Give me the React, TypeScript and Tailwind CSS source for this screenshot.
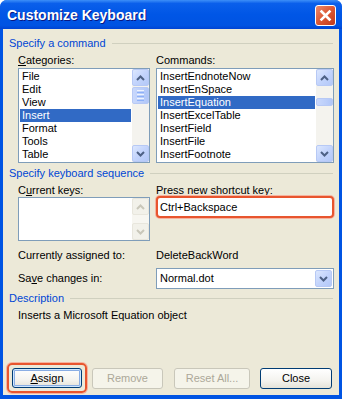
import React from "react";

function Chevron({ dir, color }: { dir: "up" | "down"; color: string }) {
  return (
    <svg width="9" height="6" viewBox="0 0 9 6">
      <path
        d={dir === "up" ? "M1 5 L4.5 1.5 L8 5" : "M1 1 L4.5 4.5 L8 1"}
        fill="none"
        stroke={color}
        strokeWidth="2"
      />
    </svg>
  );
}

function ArrowBtn({ dir, disabled }: { dir: "up" | "down"; disabled?: boolean }) {
  return (
    <div
      className={
        disabled
          ? "h-[17px] w-[17px] shrink-0 rounded-[2px] border border-[#E8E6DD] bg-[#F2F1EA] flex items-center justify-center"
          : "h-[17px] w-[17px] shrink-0 rounded-[2px] border border-[#B7C9F5] bg-[linear-gradient(135deg,#DCE7FE,#C3D4FC_50%,#B3C8F8)] flex items-center justify-center"
      }
    >
      <Chevron dir={dir} color={disabled ? "#C9C7BA" : "#4D6185"} />
    </div>
  );
}

function Thumb({ h }: { h: number }) {
  return (
    <div
      className="w-[17px] rounded-[2px] border border-[#B7C9F5] bg-[linear-gradient(to_right,#C9D8FC,#BBCEFA_60%,#B0C6F8)] flex flex-col items-center justify-center gap-[1px]"
      style={{ height: h }}
    >
      {h > 12 && (
        <>
          <div className="w-[7px] h-px bg-[#EEF4FE]" />
          <div className="w-[7px] h-px bg-[#8CB0F8]" />
          <div className="w-[7px] h-px bg-[#EEF4FE]" />
          <div className="w-[7px] h-px bg-[#8CB0F8]" />
          <div className="w-[7px] h-px bg-[#EEF4FE]" />
          <div className="w-[7px] h-px bg-[#8CB0F8]" />
        </>
      )}
    </div>
  );
}

function ScrollBar({ thumbTop, thumbH }: { thumbTop: number; thumbH: number }) {
  return (
    <div className="w-[17px] h-full flex flex-col bg-[#F4F3EE]">
      <ArrowBtn dir="up" />
      <div className="flex-1 relative">
        <div className="absolute left-0" style={{ top: thumbTop }}>
          <Thumb h={thumbH} />
        </div>
      </div>
      <ArrowBtn dir="down" />
    </div>
  );
}

function ListBox({
  items,
  selected,
  thumbTop,
  thumbH,
}: {
  items: string[];
  selected: number;
  thumbTop: number;
  thumbH: number;
}) {
  return (
    <div className="h-[95px] border border-[#7F9DB9] bg-white flex">
      <div className="flex-1 p-[1px] overflow-hidden">
        {items.map((it, i) => (
          <div
            key={it}
            className={
              i === selected
                ? "h-[13px] leading-[13px] pl-[2px] bg-[#316AC5] text-white whitespace-nowrap"
                : "h-[13px] leading-[13px] pl-[2px] whitespace-nowrap"
            }
          >
            {it}
          </div>
        ))}
      </div>
      <ScrollBar thumbTop={thumbTop} thumbH={thumbH} />
    </div>
  );
}

function GroupHeader({ title, className }: { title: string; className: string }) {
  return (
    <div className={"flex items-center h-[13px] pl-[6px] pr-[6px] " + className}>
      <span className="text-[#0046D5] leading-[13px] whitespace-nowrap">{title}</span>
      <div className="flex-1 h-px bg-[#D0D0BF] ml-[6px]" />
    </div>
  );
}

function XPButton({
  children,
  disabled,
  focused,
  className,
}: {
  children: React.ReactNode;
  disabled?: boolean;
  focused?: boolean;
  className: string;
}) {
  let cls =
    "h-[21px] rounded-[3px] flex items-center justify-center leading-[13px] " + className + " ";
  if (disabled) {
    cls += "border border-[#C9C7BA] bg-[#F5F4EA] text-[#ACA899]";
  } else if (focused) {
    cls +=
      "border border-[#003C74] bg-[linear-gradient(to_bottom,#FFFFFF,#F4F3EF_60%,#E4E2D8)] shadow-[inset_0_0_0_1px_#CEE7FF,inset_0_0_0_2px_#89ADE4]";
  } else {
    cls +=
      "border border-[#003C74] bg-[linear-gradient(to_bottom,#FFFFFF,#F4F3EF_60%,#E4E2D8)]";
  }
  return <div className={cls}>{children}</div>;
}

export default function App() {
  return (
    <div className="w-[342px] h-[399px] bg-white font-['Liberation_Sans',Arial,sans-serif] text-[11px] leading-[13px] text-black">
      <div className="w-full h-full rounded-t-[7px] overflow-hidden bg-[#0054E3] flex flex-col">
        {/* Title bar */}
        <div className="h-[29px] shrink-0 flex items-start justify-between bg-[linear-gradient(to_bottom,#3D8FF8_0%,#0A5FEB_12%,#0056E6_50%,#0053E2_88%,#0043D3_100%)]">
          <div className="pl-[7px] pt-[7px] text-white font-bold text-[14px] leading-[16px] [text-shadow:1px_1px_0_#0A1883]">
            Customize Keyboard
          </div>
          <div className="mt-[5px] mr-[6px] w-[21px] h-[21px] rounded-[3px] border border-white bg-[linear-gradient(135deg,#EC8A6D,#DC5733_50%,#C23A1B)] flex items-center justify-center">
            <svg width="13" height="13" viewBox="0 0 13 13">
              <path d="M2.5 2.5 L10.5 10.5 M10.5 2.5 L2.5 10.5" stroke="white" strokeWidth="2.6" strokeLinecap="square" />
            </svg>
          </div>
        </div>

        {/* Client */}
        <div className="flex-1 mx-[3px] mb-[4px] bg-[#ECE9D8] flex flex-col">
          <GroupHeader title="Specify a command" className="mt-[8px]" />

          <div className="ml-[15px] mt-[4px] grid grid-cols-[132px_178px] gap-x-[6px]">
            <div className="h-[13px]">
              <span className="underline">C</span>ategories:
            </div>
            <div className="h-[13px]">Commands:</div>
            <div className="mt-[1px]">
              <ListBox
                items={["File", "Edit", "View", "Insert", "Format", "Tools", "Table"]}
                selected={3}
                thumbTop={1}
                thumbH={17}
              />
            </div>
            <div className="mt-[1px]">
              <ListBox
                items={[
                  "InsertEndnoteNow",
                  "InsertEnSpace",
                  "InsertEquation",
                  "InsertExcelTable",
                  "InsertField",
                  "InsertFile",
                  "InsertFootnote",
                ]}
                selected={2}
                thumbTop={12}
                thumbH={8}
              />
            </div>
          </div>

          <GroupHeader title="Specify keyboard sequence" className="mt-[4px]" />

          <div className="ml-[15px] mt-[4px] grid grid-cols-[132px_178px] gap-x-[6px] items-start">
            <div className="h-[13px]">
              C<span className="underline">u</span>rrent keys:
            </div>
            <div className="h-[13px]">
              Press <span className="underline">n</span>ew shortcut key:
            </div>
            <div className="h-[44px] border border-[#7F9DB9] bg-white flex">
              <div className="flex-1" />
              <div className="w-[17px] h-full flex flex-col bg-[#F7F6F1]">
                <ArrowBtn dir="up" disabled />
                <div className="flex-1" />
                <ArrowBtn dir="down" disabled />
              </div>
            </div>
            <div className="h-[22px] -mt-[1px] rounded-[4px] border-2 border-[#E8552E] bg-white flex items-center pl-[2px] shadow-[0_0_0_1px_#F6B39F]">
              Ctrl+Backspace
            </div>
          </div>

          <div className="ml-[15px] mt-[8px] grid grid-cols-[132px_178px] gap-x-[6px] items-center">
            <div className="h-[13px]">Currently assigned to:</div>
            <div className="h-[13px]">DeleteBackWord</div>
          </div>

          <div className="ml-[15px] mt-[6px] grid grid-cols-[132px_178px] gap-x-[6px] items-center">
            <div className="h-[13px]">
              Sa<span className="underline">v</span>e changes in:
            </div>
            <div className="h-[21px] border border-[#7F9DB9] bg-white flex items-center">
              <div className="flex-1 pl-[3px]">Normal.dot</div>
              <div className="mr-[1px]">
                <ArrowBtn dir="down" />
              </div>
            </div>
          </div>

          <GroupHeader title="Description" className="mt-[3px]" />

          <div className="ml-[15px] mt-[4px] h-[13px]">Inserts a Microsoft Equation object</div>

          <div className="mt-auto mb-[2px] flex items-center">
            <div className="ml-[4px] w-[80px] h-[30px] rounded-[5px] border-2 border-[#E8552E] p-[3px] shadow-[0_0_0_1px_#F6B39F]">
              <XPButton focused className="w-full !h-[20px]">
                <span>
                  <span className="underline">A</span>ssign
                </span>
              </XPButton>
            </div>
            <XPButton disabled className="ml-[5px] w-[71px]">
              Remove
            </XPButton>
            <XPButton disabled className="ml-[11px] w-[76px]">
              Reset All...
            </XPButton>
            <XPButton className="ml-[10px] w-[72px]">Close</XPButton>
          </div>
        </div>
      </div>
    </div>
  );
}
